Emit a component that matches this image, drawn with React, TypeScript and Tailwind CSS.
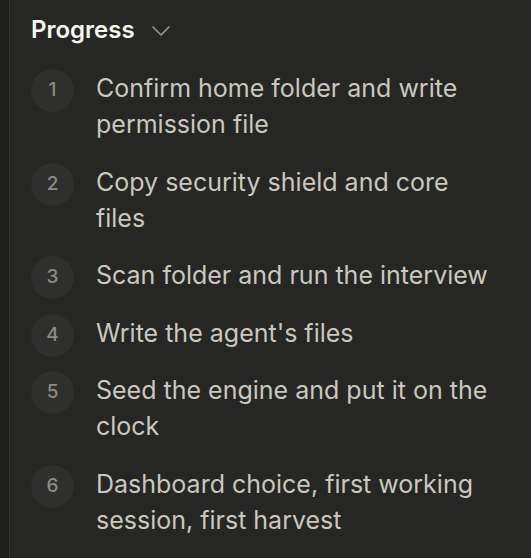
import React from "react";

const steps = [
  "Confirm home folder and write permission file",
  "Copy security shield and core files",
  "Scan folder and run the interview",
  "Write the agent's files",
  "Seed the engine and put it on the clock",
  "Dashboard choice, first working session, first harvest",
];

export default function App() {
  return (
    <div className="flex h-[558px] w-[531px] overflow-hidden bg-[#1e1e1c]" style={{ fontFamily: "Inter, 'Noto Sans', sans-serif" }}>
      <div className="w-[9px] shrink-0" />
      <div className="flex-1 border-l border-[#333331] bg-[#262624] pl-[21px] pr-[40px] pt-[12px]">
        <div className="flex items-center gap-[16px]">
          <span className="text-[24px] font-semibold leading-[36px] text-[#f7f7f2]">Progress</span>
          <svg width="20" height="12" viewBox="0 0 20 12" fill="none" className="mt-[1px]">
            <path d="M2 2 L10 10 L18 2" stroke="#9a9a94" strokeWidth="1.6" strokeLinecap="round" strokeLinejoin="round" />
          </svg>
        </div>
        <div className="mt-[22px] flex flex-col gap-[21.5px]">
          {steps.map((s, i) => (
            <div key={i} className="flex items-start gap-[22px]">
              <div className="mt-[-1px] mb-[-8px] flex h-[43px] w-[43px] shrink-0 items-center justify-center rounded-full bg-[#2f2f2d] text-[19px] font-medium text-[#8c8c86]">
                {i + 1}
              </div>
              <div className="text-[25px] leading-[36px] text-[#c9c8bf]">{s}</div>
            </div>
          ))}
        </div>
      </div>
    </div>
  );
}
